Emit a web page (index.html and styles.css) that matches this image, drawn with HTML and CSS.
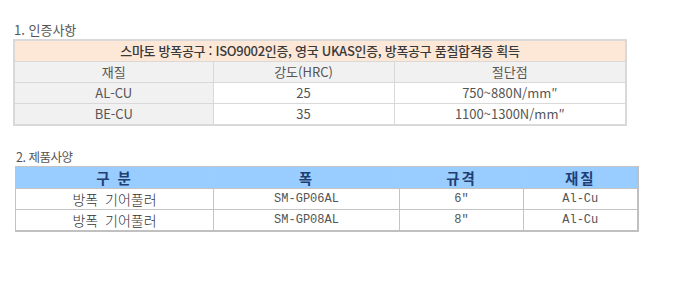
FILE: index.html
```html
<!DOCTYPE html>
<html lang="ko">
<head>
<meta charset="utf-8">
<link rel="stylesheet" href="styles.css">
</head>
<body>
<div class="page">
  <h2 class="title t1">1. 인증사항</h2>
  <table class="cert">
    <colgroup><col class="c1"><col class="c2"><col class="c3"></colgroup>
    <tr class="banner"><td colspan="3">스마토 방폭공구 : ISO9002인증, 영국 UKAS인증, 방폭공구 품질합격증 획득</td></tr>
    <tr class="head"><td>재질</td><td>강도(HRC)</td><td>절단점</td></tr>
    <tr><td class="grey">AL-CU</td><td>25</td><td>750~880N/mm″</td></tr>
    <tr><td class="grey">BE-CU</td><td>35</td><td>1100~1300N/mm″</td></tr>
  </table>

  <h2 class="title t2">2. 제품사양</h2>
  <table class="spec">
    <colgroup><col class="s1"><col class="s2"><col class="s3"><col class="s4"></colgroup>
    <tr class="shead"><td>구 분</td><td>폭</td><td>규격</td><td>재질</td></tr>
    <tr><td class="ko">방폭 기어풀러</td><td class="mono">SM-GP06AL</td><td class="mono">6"</td><td class="mono">Al-Cu</td></tr>
    <tr><td class="ko">방폭 기어풀러</td><td class="mono">SM-GP08AL</td><td class="mono">8"</td><td class="mono">Al-Cu</td></tr>
  </table>
</div>
</body>
</html>
```

FILE: styles.css
```css
html, body {
  margin: 0;
  padding: 0;
  background: #fff;
}
.page {
  font-family: "Noto Sans CJK KR", "Noto Sans", sans-serif;
  color: #555;
}
.title {
  margin: 0;
  font-weight: normal;
  color: #555;
  line-height: 16px;
}
.t1 {
  font-size: 13px;
  padding: 22px 0 0 14px;
  height: 17px;
}
.t2 {
  font-size: 12.5px;
  padding: 0 0 0 16px;
  margin-top: 23px;
  height: 17px;
  letter-spacing: -0.5px;
}
.cert {
  margin-left: 13px;
  width: 612px;
  border-collapse: collapse;
  border: 2px solid #d9d9d9;
  font-size: 13px;
  table-layout: fixed;
}
.cert col.c1 { width: 199px; }
.cert col.c2 { width: 181px; }
.cert col.c3 { width: 232px; }
.cert td {
  border: 1px solid #d9d9d9;
  height: 20px;
  padding: 0;
  line-height: 20px;
  text-align: center;
  color: #555;
  letter-spacing: 0;
}
.cert .banner td {
  background: #fde8d8;
  color: #3a3a3a;
  font-weight: 500;
  letter-spacing: -0.3px;
}
.cert .head td,
.cert td.grey {
  background: #f1f1f1;
}
.spec {
  margin-left: 15px;
  width: 622px;
  border-collapse: collapse;
  table-layout: fixed;
  border-top: 1px solid #dcdcdc;
  border-left: 1px solid #c4c4c4;
  border-right: 2px solid #c0c0c0;
  border-bottom: 2px solid #c0c0c0;
}
.spec col.s1 { width: 198px; }
.spec col.s2 { width: 186px; }
.spec col.s3 { width: 124px; }
.spec col.s4 { width: 114px; }
.spec td {
  border: 1px solid #c4c4c4;
  padding: 0;
  height: 20px;
  line-height: 20px;
  text-align: center;
  color: #333;
}
.spec .shead td {
  background: #99ccff;
  height: 21px;
  line-height: 21px;
  color: #1f3f73;
  font-weight: bold;
  font-size: 14.5px;
  letter-spacing: 2px;
}
.spec td.ko {
  font-size: 14px;
  font-weight: 300;
  word-spacing: 3px;
}
.spec td.mono {
  font-family: "Liberation Mono", "DejaVu Sans Mono", monospace;
  font-size: 12px;
  color: #555;
}
```
